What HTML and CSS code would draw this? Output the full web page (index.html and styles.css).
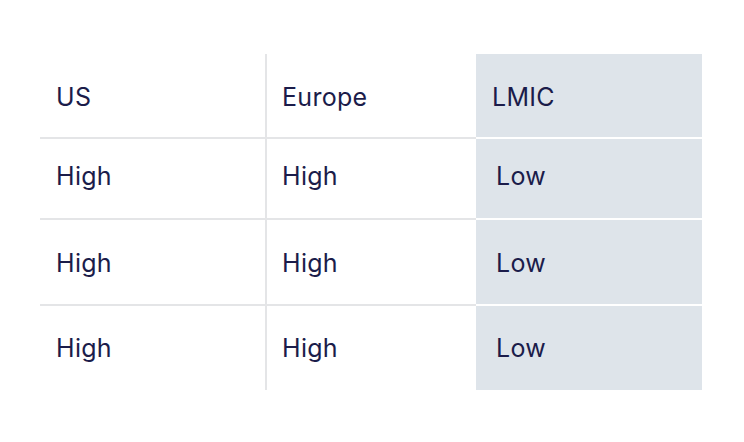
FILE: index.html
```html
<!DOCTYPE html>
<html>
<head>
<meta charset="utf-8">
<link rel="stylesheet" href="styles.css">
</head>
<body>
<div class="table">
  <div class="cell c1 r0">US</div>
  <div class="cell c2 r0">Europe</div>
  <div class="cell c3 r0">LMIC</div>

  <div class="cell c1 r1">High</div>
  <div class="cell c2 r1">High</div>
  <div class="cell c3 body r1">Low</div>

  <div class="cell c1 r2">High</div>
  <div class="cell c2 r2">High</div>
  <div class="cell c3 body r2">Low</div>

  <div class="cell c1 r3">High</div>
  <div class="cell c2 r3">High</div>
  <div class="cell c3 body r3">Low</div>
</div>
</body>
</html>
```

FILE: styles.css
```css
html, body {
  margin: 0;
  padding: 0;
  background: #ffffff;
}
body {
  padding: 54px 0 0 40px;
  font-family: Inter, "Noto Sans", sans-serif;
  color: #1b1c4a;
}
.table {
  display: grid;
  grid-template-columns: 227px 209px 226px;
  grid-template-rows: 85px 81px 86px 84px;
  width: 662px;
}
.cell {
  display: flex;
  align-items: center;
  font-size: 25px;
  line-height: 1;
  letter-spacing: 0.3px;
  box-sizing: border-box;
  border-bottom: 2px solid #e4e5e7;
}
.c1 {
  padding-left: 16px;
  border-right: 2px solid #e4e5e7;
}
.c2 {
  padding-left: 15px;
}
.c3 {
  padding-left: 16px;
  background: #dee4ea;
  border-bottom-color: #ffffff;
}
.c3.body {
  padding-left: 20px;
}
.r0 {
  padding-top: 3px;
}
.r1 {
  padding-bottom: 5px;
}
.r2 {
  padding-top: 2px;
}
.r3 {
  border-bottom: none;
}
```
